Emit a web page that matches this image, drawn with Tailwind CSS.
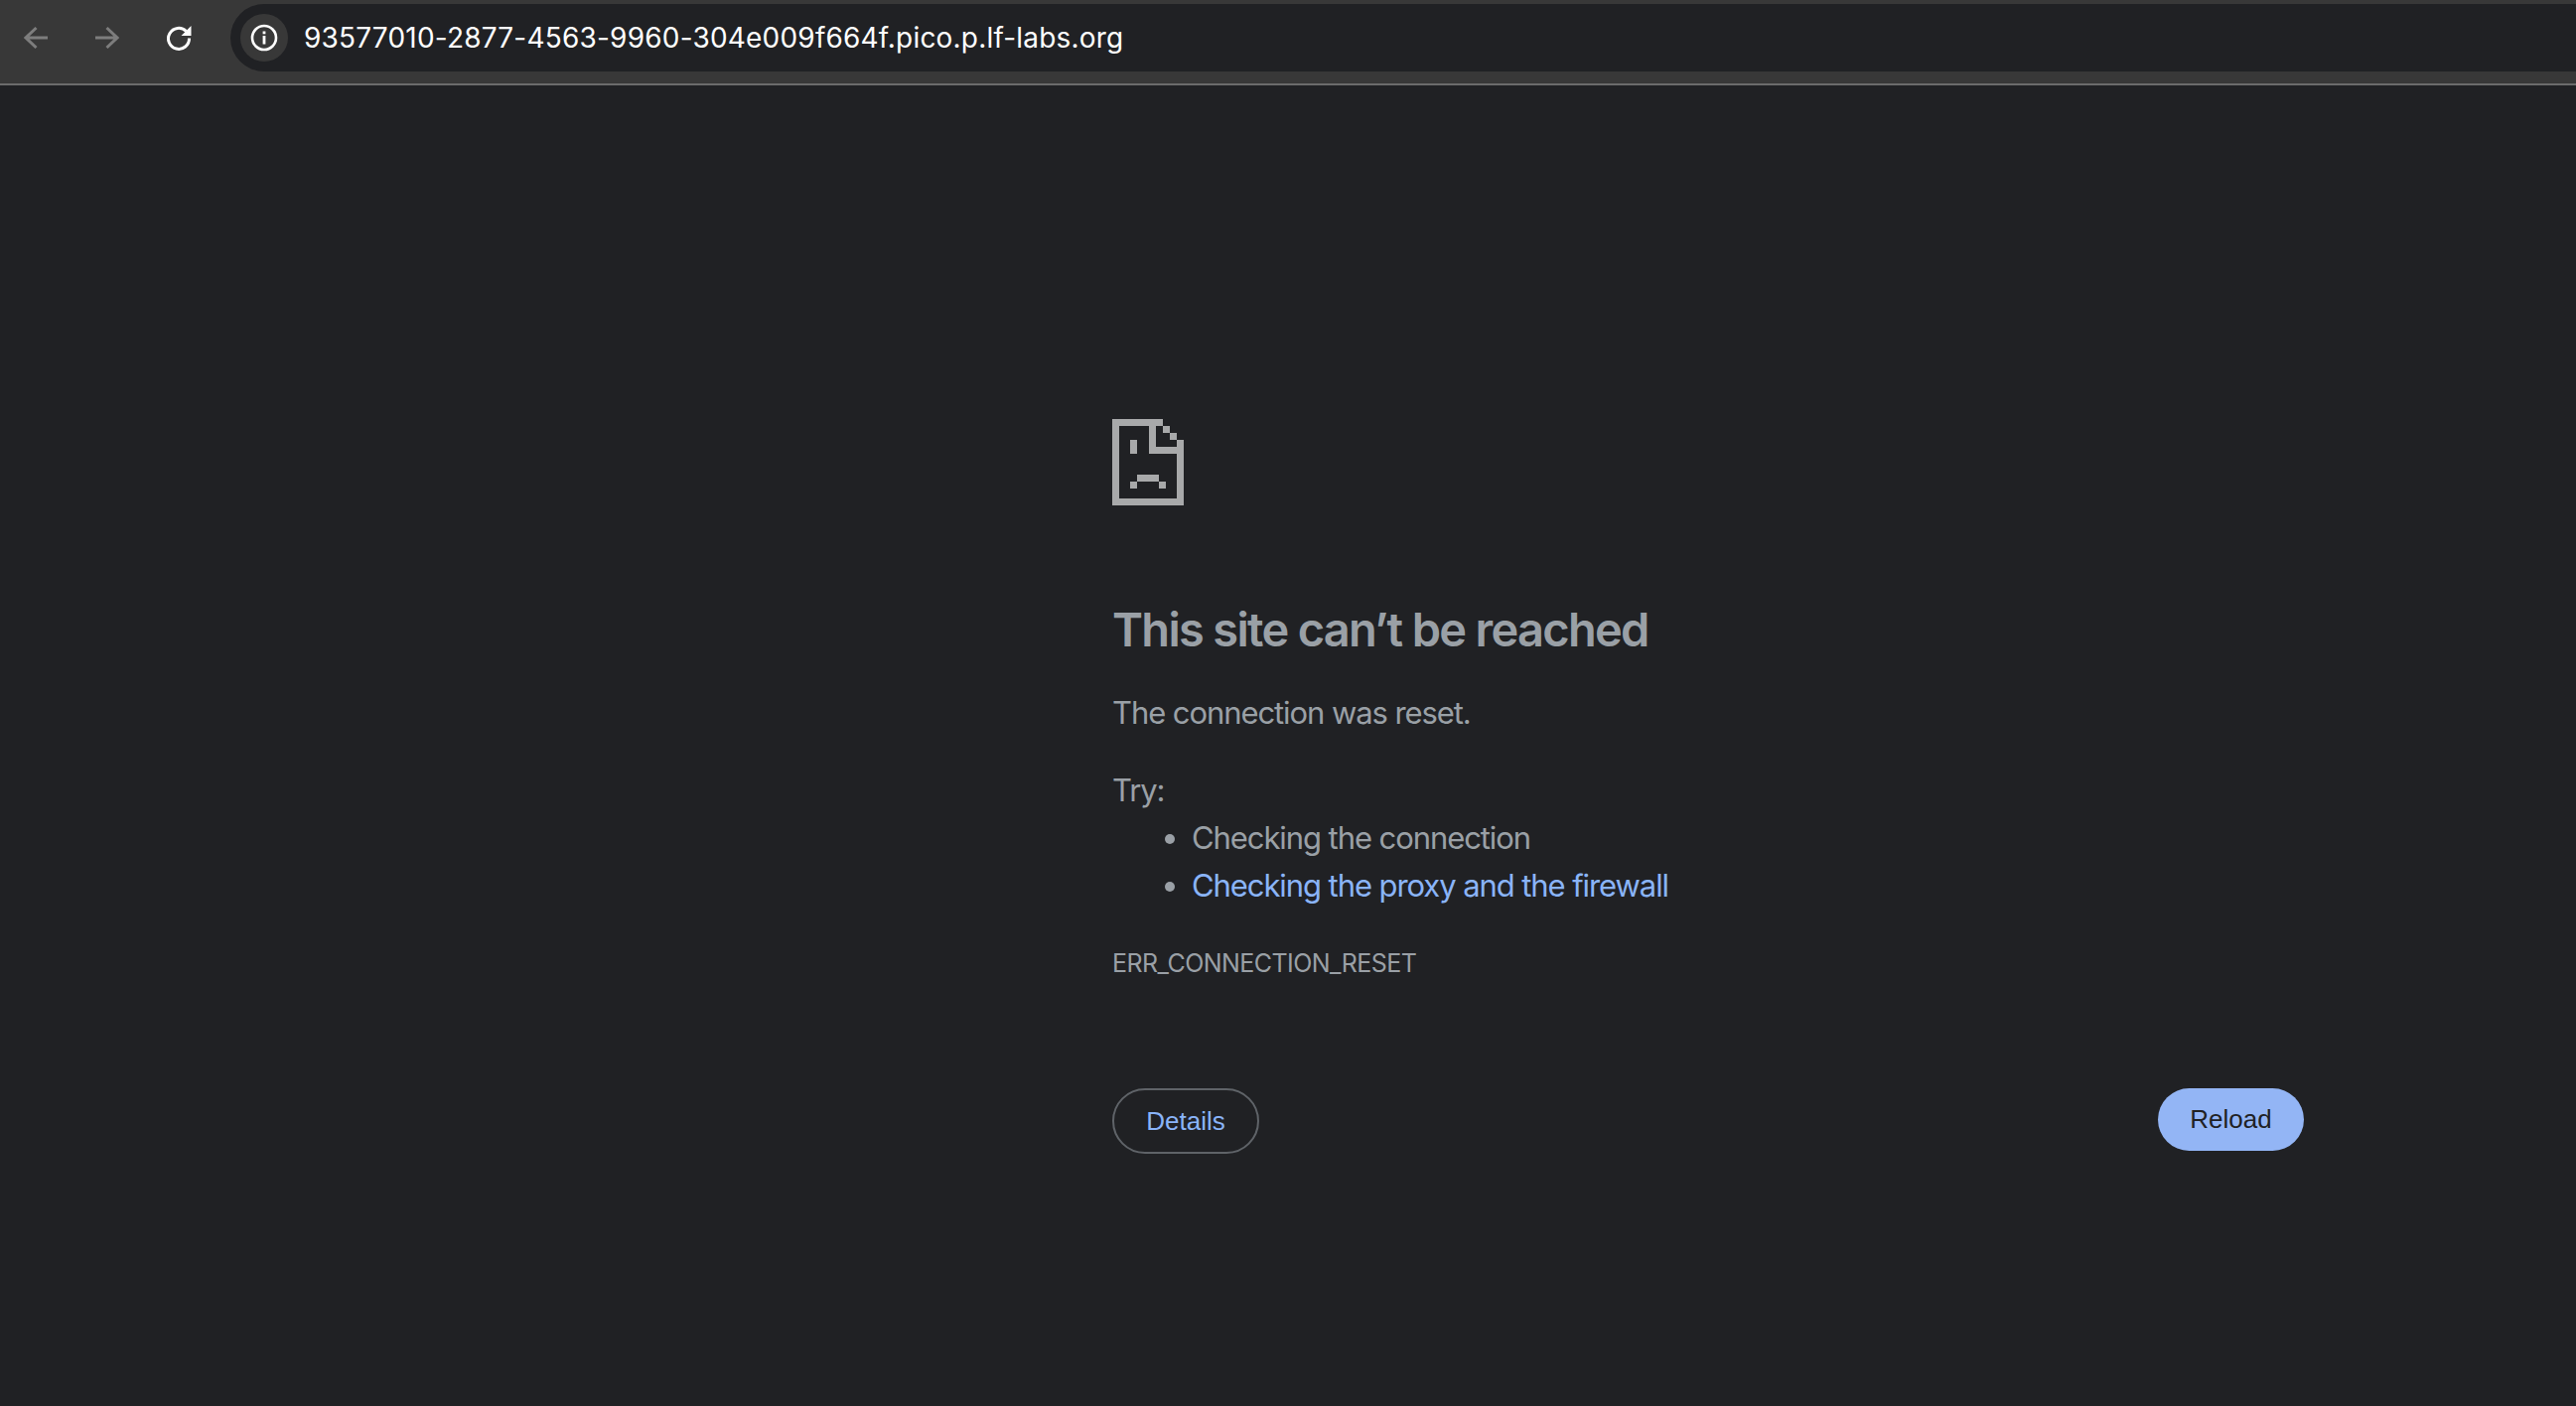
<!DOCTYPE html>
<html lang="en">
<head>
  <meta charset="UTF-8" />
  <title>This site can't be reached</title>
  <script src="https://cdn.jsdelivr.net/npm/@tailwindcss/browser@4"></script>
</head>
<body class="w-[2594px] h-[1416px] overflow-hidden bg-[#202124] font-['Inter',sans-serif]">

  <!-- toolbar -->
  <div class="h-[86px] bg-[#383838] border-b-2 border-[#6b6b6b] flex items-start pt-1">
    <div class="flex items-center h-[68px] pl-[24px] gap-[48px] w-[232px] shrink-0">
      <svg class="w-6 h-6 shrink-0" viewBox="0 0 24 24" fill="none" stroke="#7d7d7d" stroke-width="3" stroke-linejoin="miter"><path d="M24 12H3M12.5 2 2 12l10.5 10"/></svg>
      <svg class="w-6 h-6 shrink-0" viewBox="0 0 24 24" fill="none" stroke="#7d7d7d" stroke-width="3" stroke-linejoin="miter"><path d="M0 12h21M11.500 2 22 12 11.500 22"/></svg>
      <svg class="w-6 h-6 shrink-0 overflow-visible" viewBox="0 0 24 24" fill="none" stroke="#ffffff" stroke-width="3"><path d="M19.500 5.500a10.500 10.500 0 1 0 3 7"/><path d="M24.500 0v10h-10z" fill="#ffffff" stroke="none"/></svg>
    </div>
    <div class="flex-1 h-[68px] bg-[#202124] rounded-l-[34px] flex items-center pl-[10px]">
      <div class="w-12 h-12 rounded-full bg-[#383838] flex items-center justify-center">
        <svg class="w-7 h-7" viewBox="0 0 28 28" fill="none"><circle cx="14" cy="14" r="12" stroke="#ffffff" stroke-width="2.600"/><rect x="12.600" y="12" width="2.800" height="8.500" fill="#ffffff"/><rect x="12.600" y="7.500" width="2.800" height="2.800" fill="#ffffff"/></svg>
      </div>
      <span class="ml-4 text-[28px] leading-none tracking-[0.2px] text-white">93577010-2877-4563-9960-304e009f664f.pico.p.lf-labs.org</span>
    </div>
  </div>

  <!-- error page -->
  <main class="w-[1200px] ml-[1120px] pt-[336px] text-[31px] tracking-[-1.08px] text-[#9aa0a6]">
    <svg class="w-[72px] h-[87px] block" viewBox="0 0 72 87" fill="#a8a9aa" shape-rendering="crispEdges">
      <rect x="0" y="0" width="51" height="7"/>
      <rect x="0" y="0" width="7" height="87"/>
      <rect x="0" y="80" width="72" height="7"/>
      <rect x="65" y="21" width="7" height="66"/>
      <rect x="51" y="7" width="7" height="7"/>
      <rect x="58" y="14" width="7" height="7"/>
      <rect x="37" y="7" width="7" height="28"/>
      <rect x="37" y="28" width="35" height="7"/>
      <rect x="18" y="21" width="7" height="14"/>
      <rect x="25" y="56" width="22" height="7"/>
      <rect x="18" y="63" width="7" height="7"/>
      <rect x="47" y="63" width="7" height="7"/>
    </svg>
    <h1 class="mt-[97px] text-[47px] leading-[56px] tracking-[-1.7px] font-semibold text-[#9aa0a6]">This site can’t be reached</h1>
    <p class="mt-[36px] leading-[40px]">The connection was reset.</p>
    <p class="mt-[38px] leading-[40px]">Try:</p>
    <ul class="mt-[4px] pl-[80px] list-disc leading-[48px] marker:text-[#9aa0a6]">
      <li>Checking the connection</li>
      <li class="text-[#8ab4f8]">Checking the proxy and the firewall</li>
    </ul>
    <p class="mt-[38px] text-[25px] tracking-[-0.55px] leading-[32px]">ERR_CONNECTION_RESET</p>
    <div class="mt-[110px] flex justify-between items-start font-['Liberation_Sans',sans-serif] text-[26px] tracking-normal">
      <button class="w-[148px] h-[66px] rounded-[33px] border-2 border-[#5f6368] text-[#8ab4f8]">Details</button>
      <button class="w-[147px] h-[63px] rounded-[32px] bg-[#93b5f5] text-[#202124]">Reload</button>
    </div>
  </main>

</body>
</html>
